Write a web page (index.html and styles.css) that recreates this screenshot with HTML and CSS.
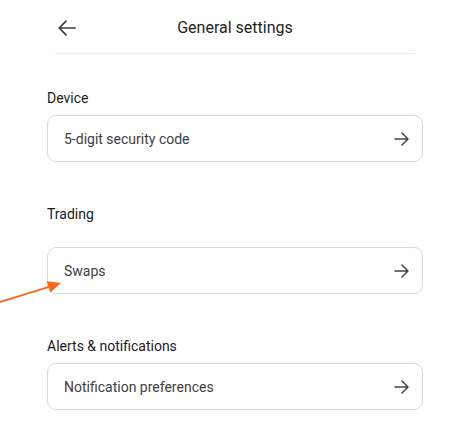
FILE: index.html
```html
<!DOCTYPE html>
<html>
<head>
  <title>General settings</title>
  <link rel="stylesheet" href="styles.css">
</head>
<body>
  <section class="settings-wrap">
    <div class="settings-header">
      <button class="back-btn" aria-label="Back">
        <svg width="18" height="16" viewBox="0 0 18 16" fill="none" stroke="#3a3a44" stroke-width="1.7" stroke-linecap="round" stroke-linejoin="round">
          <path d="M17 8H1.5M8 1.2L1.2 8L8 14.8"/>
        </svg>
      </button>
      <h1 class="settings-title">General settings</h1>
      <span></span>
    </div>

    <div class="settings-group group-device">
      <h2 class="group-label">Device</h2>
      <a class="setting-row" href="#">
        <span>5-digit security code</span>
        <svg class="row-arrow" width="15" height="14" viewBox="0 0 15 14" fill="none" stroke="#444" stroke-width="1.5" stroke-linecap="round" stroke-linejoin="round">
          <path d="M1 7H14M8 1L14 7L8 13"/>
        </svg>
      </a>
    </div>

    <div class="settings-group group-trading">
      <h2 class="group-label">Trading</h2>
      <a class="setting-row" href="#">
        <span>Swaps</span>
        <svg class="row-arrow" width="15" height="14" viewBox="0 0 15 14" fill="none" stroke="#444" stroke-width="1.5" stroke-linecap="round" stroke-linejoin="round">
          <path d="M1 7H14M8 1L14 7L8 13"/>
        </svg>
      </a>
    </div>

    <div class="settings-group group-alerts">
      <h2 class="group-label">Alerts &amp; notifications</h2>
      <a class="setting-row" href="#">
        <span>Notification preferences</span>
        <svg class="row-arrow" width="15" height="14" viewBox="0 0 15 14" fill="none" stroke="#444" stroke-width="1.5" stroke-linecap="round" stroke-linejoin="round">
          <path d="M1 7H14M8 1L14 7L8 13"/>
        </svg>
      </a>
    </div>
  </section>

  <!-- annotation pointing at the Swaps row -->
  <svg class="pointer" width="70" height="35" viewBox="0 0 70 35">
    <line x1="-2" y1="27.6" x2="50" y2="11.6" stroke="#f26a1f" stroke-width="2"/>
    <polygon points="61,8 46.8,6.2 50.4,17.6" fill="#f26a1f"/>
  </svg>
</body>
</html>
```

FILE: styles.css
```css
* {
  margin: 0;
  padding: 0;
  box-sizing: border-box;
  font-family: Roboto, Arial, Helvetica, sans-serif;
}

body {
  background-color: #fff;
  color: #1f1f1f;
}

.settings-wrap {
  width: 376px;
  margin-left: 47px;
}

.settings-header {
  display: grid;
  grid-template-columns: 24px 1fr 24px;
  align-items: center;
  width: 360px;
  height: 54px;
  margin-left: 8px;
  padding-top: 2px;
  border-bottom: 1px solid #ededed;
}

.back-btn {
  display: flex;
  align-items: center;
  background: none;
  border: none;
  padding-left: 3px;
  cursor: pointer;
}

.settings-title {
  text-align: center;
  font-size: 16px;
  font-weight: 400;
  line-height: 20px;
  color: #1e1e1e;
}

.group-label {
  font-size: 14px;
  font-weight: 400;
  line-height: 20px;
  color: #1a1a1a;
}

.group-device {
  margin-top: 34px;
}

.group-device .group-label,
.group-alerts .group-label {
  margin-bottom: 7px;
}

.group-trading,
.group-alerts {
  margin-top: 42px;
}

.group-trading .group-label {
  margin-bottom: 23px;
}

.setting-row {
  display: flex;
  align-items: center;
  justify-content: space-between;
  height: 47px;
  padding: 0 13px 0 16px;
  border: 1px solid #d9d9d9;
  border-radius: 9px;
  font-size: 14px;
  color: #3e3e3e;
  text-decoration: none;
}

.row-arrow {
  flex-shrink: 0;
}

.pointer {
  position: absolute;
  left: 0;
  top: 275px;
}
```
